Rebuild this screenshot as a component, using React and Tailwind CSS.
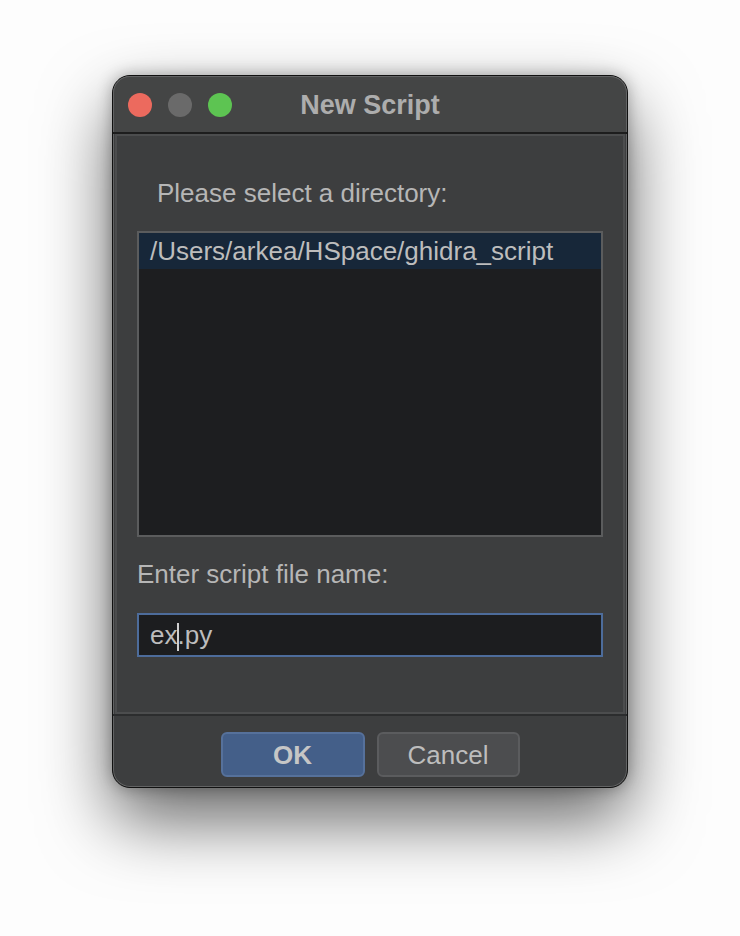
export default function App() {
  const font = { fontFamily: '"Liberation Sans", Arial, Helvetica, sans-serif' };
  return (
    <div className="w-full h-[936px] bg-[#fdfdfd] flex justify-center pt-[75px]" style={font}>
      <div className="w-[516px] h-[713px] rounded-[18px] border border-[#111] bg-[#3d3e3f] overflow-hidden flex flex-col shadow-[inset_0_0_0_1px_#626364,0_32px_70px_rgba(0,0,0,0.6),0_0_16px_rgba(0,0,0,0.3)]">
        {/* Title bar */}
        <div className="h-[56px] bg-[#444545] grid grid-cols-[1fr_auto_1fr] items-center shrink-0 rounded-t-[17px] shadow-[inset_0_1px_0_#626364,inset_1px_0_0_#626364,inset_-1px_0_0_#626364]">
          <div className="flex items-center gap-[16px] pl-[15px] pt-[2px]">
            <span className="w-[24px] h-[24px] rounded-full bg-[#ec6a5e]" />
            <span className="w-[24px] h-[24px] rounded-full bg-[#6a6a6a]" />
            <span className="w-[24px] h-[24px] rounded-full bg-[#5dc452]" />
          </div>
          <div className="text-[27px] leading-[30px] font-bold text-[#adadad] pt-[1px]">New Script</div>
          <div />
        </div>
        <div className="h-[2px] bg-[#1d1d1d] shrink-0" />
        {/* Body */}
        <div className="mx-[2px] h-[580px] border-2 border-[#4c4d4e] bg-[#3d3e3f] flex flex-col shrink-0">
          <div className="pt-[42px] pl-[40px] text-[26px] leading-[30px] text-[#b6b6b6]">Please select a directory:</div>
          <div className="mt-[23px] ml-[20px] w-[466px] h-[306px] border-2 border-[#5b5c5d] bg-[#1d1e20]">
            <div className="h-[36px] bg-[#172739] pl-[11px] text-[26px] leading-[36px] text-[#bdbdbd]">/Users/arkea/HSpace/ghidra_script</div>
          </div>
          <div className="mt-[22px] pl-[20px] text-[26px] leading-[30px] text-[#b6b6b6]">Enter script file name:</div>
          <div className="mt-[24px] ml-[20px] w-[466px] h-[44px] border-2 border-[#4d6c9b] bg-[#1c1d1f] pl-[11px] flex items-center text-[26px] leading-[30px] text-[#bdbdbd]">
            <span>ex</span>
            <span className="inline-block w-[2px] h-[28px] bg-[#cfcfcf] mt-[4px] -mr-[2px]" />
            <span>.py</span>
          </div>
        </div>
        <div className="h-[2px] bg-[#2c2d2e] shrink-0" />
        {/* Footer */}
        <div className="flex-1 flex justify-center items-start gap-[12px] pt-[16px]">
          <button className="w-[144px] h-[45px] rounded-[6px] border-2 border-[#56719b] bg-[#445f89] text-[26px] font-bold text-[#c6c6c6] leading-[30px]">OK</button>
          <button className="w-[143px] h-[45px] rounded-[6px] border-2 border-[#5b5c5e] bg-[#4c4d4f] text-[26px] text-[#bdbdbd] leading-[30px]">Cancel</button>
        </div>
      </div>
    </div>
  );
}
